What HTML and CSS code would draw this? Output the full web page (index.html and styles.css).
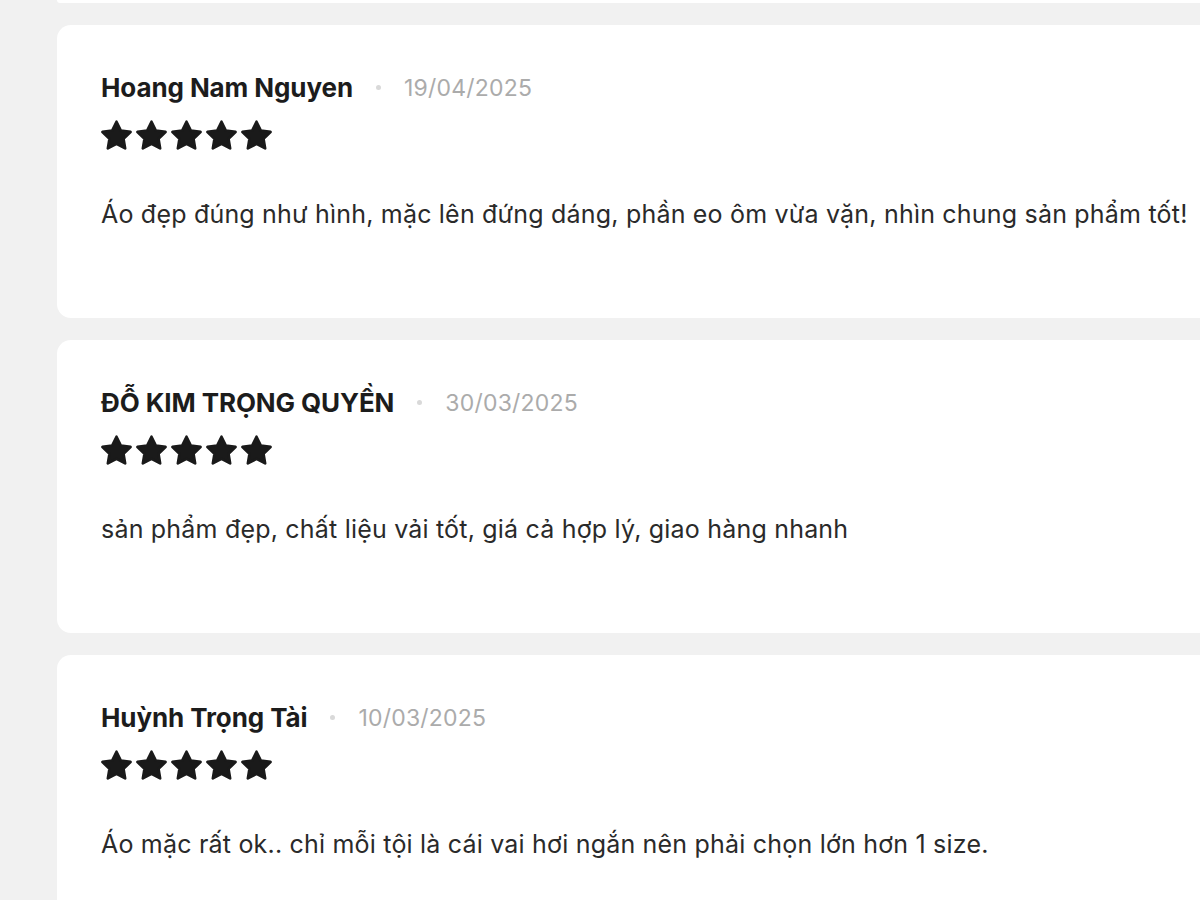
FILE: index.html
```html
<!DOCTYPE html>
<html lang="vi">
  <head>
    <meta charset="UTF-8" />
    <meta name="viewport" content="width=device-width, initial-scale=1.0" />
    <title>Đánh giá sản phẩm</title>
    <link rel="stylesheet" href="styles.css">
  </head>
  <body>
    <svg class="defs" width="0" height="0" aria-hidden="true">
      <symbol id="star" viewBox="1.6 1.6 20.8 19.8">
        <path d="M12 2.6l2.9 5.9 6.5.95-4.7 4.6 1.1 6.45L12 17.45l-5.8 3.05 1.1-6.45-4.7-4.6 6.5-.95z" />
      </symbol>
    </svg>

    <div class="reviews">
      <!-- phần cuối của đánh giá phía trên -->
      <div class="review-prev"></div>

      <div class="review">
        <div class="review-head">
          <span class="review-name">Hoang Nam Nguyen</span>
          <span class="review-dot"></span>
          <span class="review-date">19/04/2025</span>
        </div>
        <div class="stars">
          <svg><use href="#star" /></svg><svg><use href="#star" /></svg><svg><use href="#star" /></svg><svg><use href="#star" /></svg><svg><use href="#star" /></svg>
        </div>
        <p class="review-text">Áo đẹp đúng như hình, mặc lên đứng dáng, phần eo ôm vừa vặn, nhìn chung sản phẩm tốt!</p>
      </div>

      <div class="review">
        <div class="review-head">
          <span class="review-name">ĐỖ KIM TRỌNG QUYỀN</span>
          <span class="review-dot"></span>
          <span class="review-date">30/03/2025</span>
        </div>
        <div class="stars">
          <svg><use href="#star" /></svg><svg><use href="#star" /></svg><svg><use href="#star" /></svg><svg><use href="#star" /></svg><svg><use href="#star" /></svg>
        </div>
        <p class="review-text">sản phẩm đẹp, chất liệu vải tốt, giá cả hợp lý, giao hàng nhanh</p>
      </div>

      <div class="review">
        <div class="review-head">
          <span class="review-name">Huỳnh Trọng Tài</span>
          <span class="review-dot"></span>
          <span class="review-date">10/03/2025</span>
        </div>
        <div class="stars">
          <svg><use href="#star" /></svg><svg><use href="#star" /></svg><svg><use href="#star" /></svg><svg><use href="#star" /></svg><svg><use href="#star" /></svg>
        </div>
        <p class="review-text">Áo mặc rất ok.. chỉ mỗi tội là cái vai hơi ngắn nên phải chọn lớn hơn 1 size.</p>
      </div>
    </div>
  </body>
</html>
```

FILE: styles.css
```css
body {
  margin: 0;
  background-color: #f1f1f1;
  font-family: Inter, "Liberation Sans", sans-serif;
  color: #222;
  overflow: hidden;
}
.defs {
  position: absolute;
}
.reviews {
  display: flex;
  flex-direction: column;
  gap: 22px;
  padding-left: 57px;
}
.review-prev {
  width: 1200px;
  height: 3px;
  background-color: #fff;
  border-radius: 0 0 0 3px;
}
.review {
  width: 1200px;
  height: 293px;
  box-sizing: border-box;
  padding: 47px 44px 0;
  background-color: #fff;
  border-radius: 14px;
}
.review-head {
  display: flex;
  align-items: center;
  gap: 23px;
}
.review-name {
  font-size: 26px;
  font-weight: 700;
  letter-spacing: -0.1px;
  color: #1c1c1c;
}
.review-dot {
  width: 5px;
  height: 5px;
  border-radius: 50%;
  background-color: #d9d9d9;
}
.review-date {
  font-size: 23px;
  letter-spacing: 0.2px;
  color: #ababab;
}
.stars {
  display: flex;
  gap: 4px;
  margin-top: 17px;
}
.stars svg {
  width: 31px;
  height: 30px;
  fill: #1a1a1a;
  stroke: #1a1a1a;
  stroke-width: 1.8;
  stroke-linejoin: round;
}
.review-text {
  margin: 49px 0 0;
  font-size: 25px;
  letter-spacing: 0.2px;
  color: #2a2a2a;
}
```
